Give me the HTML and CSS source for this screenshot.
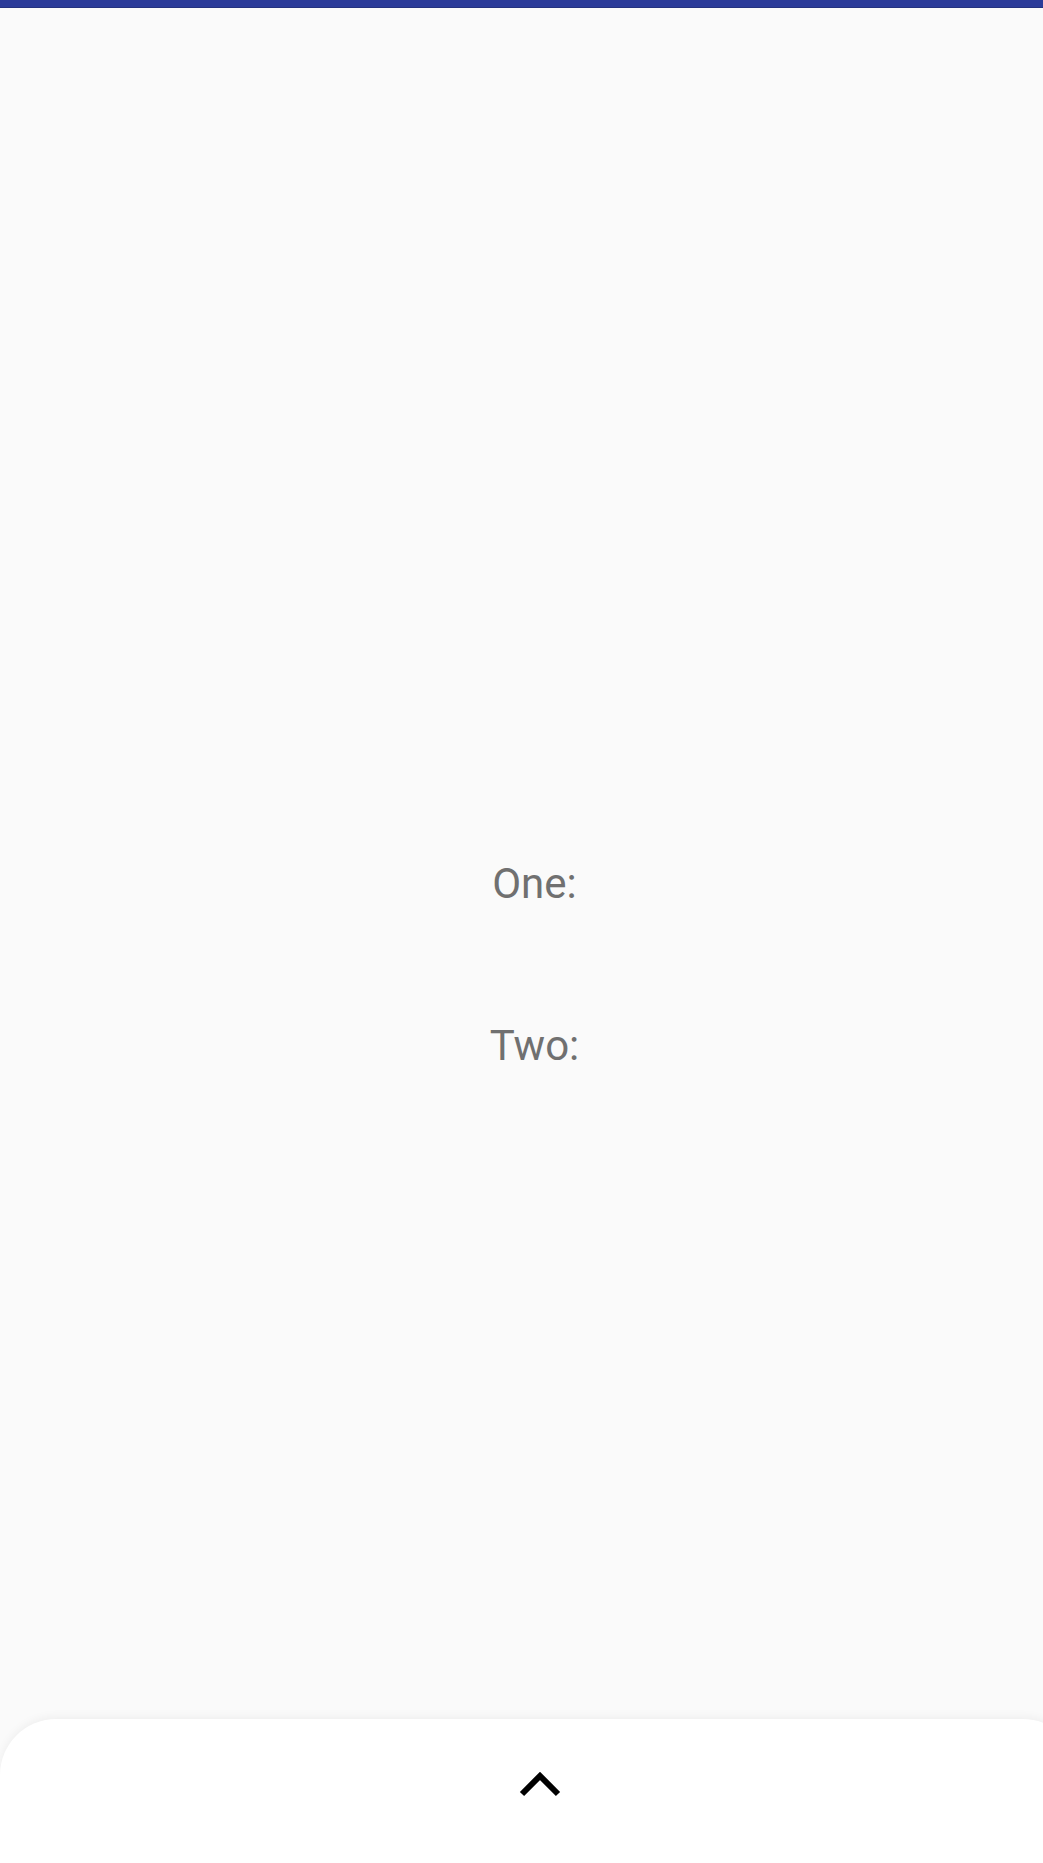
FILE: index.html
```html
<!DOCTYPE html>
<html>
<head>
<meta charset="utf-8">
<link rel="stylesheet" href="styles.css">
</head>
<body>
<div class="screen">
  <div class="topbar"></div>
  <main class="content">
    <div class="label">One:</div>
    <div class="label">Two:</div>
  </main>
  <div class="sheet">
    <svg class="chevron" width="50" height="34" viewBox="0 0 50 34">
      <polyline points="7,28 25,10 43,28" fill="none" stroke="#000" stroke-width="6" stroke-linejoin="miter" stroke-linecap="butt"/>
    </svg>
  </div>
</div>
</body>
</html>
```

FILE: styles.css
```css
html, body {
  margin: 0;
  padding: 0;
  background: #fafafa;
  overflow: hidden;
}

.screen {
  width: 1043px;
  height: 1863px;
  display: flex;
  flex-direction: column;
  overflow: hidden;
  font-family: Roboto, "Noto Sans", sans-serif;
}

.topbar {
  height: 8px;
  flex: none;
  background: #2b3b99;
  border-bottom: 1px solid #24327f;
  box-sizing: border-box;
}

.content {
  flex: 1;
  display: flex;
  flex-direction: column;
  align-items: center;
  gap: 113px;
  padding-top: 851px;
  padding-left: 26px;
}

.label {
  font-size: 42px;
  line-height: 49px;
  color: #707070;
}

.sheet {
  flex: none;
  height: 144px;
  width: 1079px;
  background: #ffffff;
  border-radius: 56px 56px 0 0;
  box-shadow: 0 -2px 10px rgba(0, 0, 0, 0.05);
  display: flex;
  justify-content: center;
  align-items: flex-start;
  padding-top: 47px;
  box-sizing: border-box;
}

.chevron {
  display: block;
}
```
